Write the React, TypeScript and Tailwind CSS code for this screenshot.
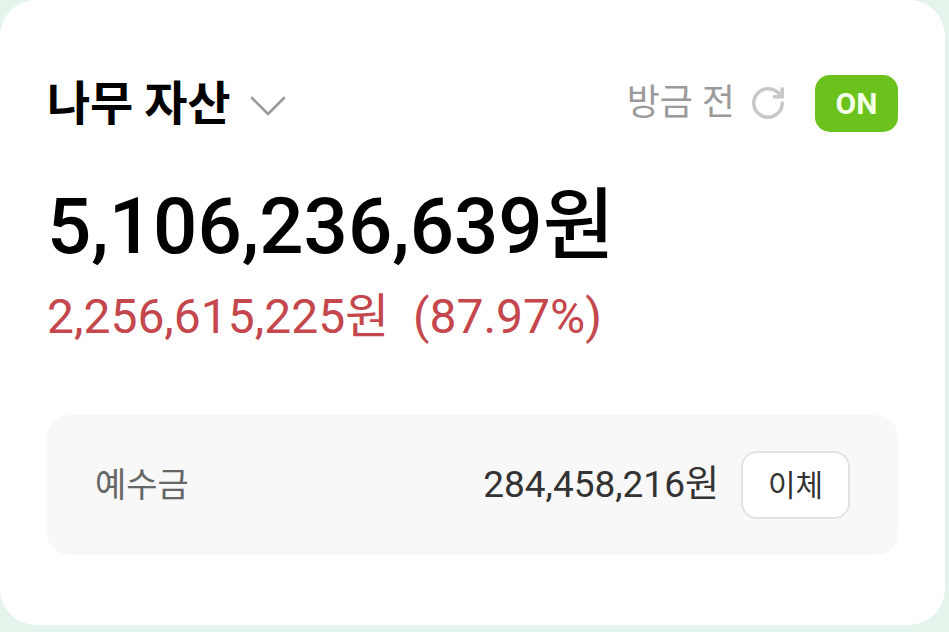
import { RotateCw } from "lucide-react";

const font = { fontFamily: "Roboto, 'Noto Sans CJK KR', sans-serif" };

export default function App() {
  return (
    <div className="w-[949px] h-[632px] bg-[#e4f4ea] overflow-hidden" style={font}>
      <div className="w-[945px] h-[625px] bg-white rounded-[36px] px-[47px] pt-[74px]">
        {/* header row */}
        <div className="flex items-center justify-between h-[58px]">
          <div className="flex items-center gap-[20px]">
            <span className="text-[47px] font-bold text-black leading-none tracking-[-0.3px]">나무 자산</span>
            <svg width="36" height="20" viewBox="0 0 36 20" className="mt-[6px]" fill="none">
              <polyline points="2,2 18,18 34,2" stroke="#9a9a9a" strokeWidth="2.6" strokeLinecap="round" strokeLinejoin="round" />
            </svg>
          </div>
          <div className="flex items-center">
            <span className="text-[36px] text-[#9a9a9a] leading-none">방금 전</span>
            <RotateCw className="w-[38px] h-[38px] text-[#c8c8c8] ml-[14px]" strokeWidth={2.2} />
            <div className="ml-[28px] w-[83px] h-[57px] rounded-[15px] bg-[#6cc21c] flex items-center justify-center">
              <span className="text-[30px] font-bold text-[#f3ffe6]">ON</span>
            </div>
          </div>
        </div>

        {/* total */}
        <div className="mt-[56px] text-[78px] font-medium text-black leading-none">
          5,106,236,639원
        </div>
        <div className="mt-[27px] text-[48px] text-[#c4474d] leading-none whitespace-pre">
          2,256,615,225원  (87.97%)
        </div>

        {/* deposit box */}
        <div className="mt-[74px] h-[140px] rounded-[22px] bg-[#f8f8f8] flex items-center justify-between pl-[48px] pr-[48px]">
          <span className="text-[34px] text-[#666]">예수금</span>
          <div className="flex items-center gap-[22px]">
            <span className="text-[37px] text-[#333]">284,458,216원</span>
            <button className="w-[109px] h-[68px] rounded-[16px] bg-white border-2 border-[#e2e2e2] text-[30px] text-[#333]">
              이체
            </button>
          </div>
        </div>
      </div>
    </div>
  );
}
